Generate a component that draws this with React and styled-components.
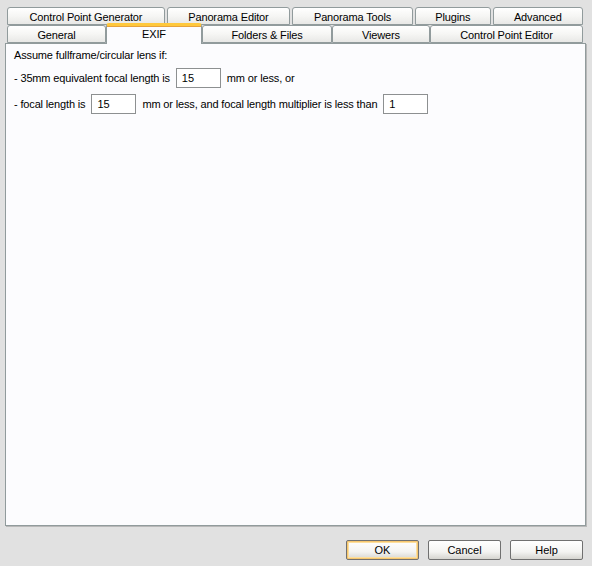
import React from "react";
import styled, { createGlobalStyle } from "styled-components";

const GlobalStyle = createGlobalStyle`
  html, body {
    margin: 0;
    padding: 0;
    background: #e1e1e1;
  }
  body {
    font-family: "Liberation Sans", Arial, sans-serif;
    font-size: 11px;
    letter-spacing: -0.15px;
    color: #000;
  }
`;

const Dialog = styled.div`
  width: 592px;
  height: 566px;
  box-sizing: border-box;
  padding: 8px 6px 0 5px;
  display: flex;
  flex-direction: column;
`;

const TabStrip = styled.div`
  display: flex;
  flex-direction: column;
  padding: 0 3px 0 2px;
`;

const TabRow = styled.div`
  display: flex;
  gap: ${(p) => p.$gap}px;
  height: ${(p) => p.$h}px;
  align-items: flex-end;
`;

const Tab = styled.div`
  position: relative;
  box-sizing: border-box;
  width: ${(p) => p.$w}px;
  height: ${(p) => (p.$active ? 21 : 18)}px;
  margin-bottom: ${(p) => (p.$active ? -1 : 0)}px;
  z-index: ${(p) => (p.$active ? 2 : 1)};
  display: flex;
  align-items: center;
  justify-content: center;
  padding-top: ${(p) => (p.$active ? 0 : 1)}px;
  border: 1px solid #919b9c;
  border-bottom: ${(p) => (p.$active ? "none" : "1px solid #919b9c")};
  border-radius: 3px 3px 0 0;
  background: ${(p) =>
    p.$active
      ? "#fcfcfe"
      : "linear-gradient(to bottom, #ffffff 0%, #f6f6f4 50%, #e8e8e6 100%)"};
  white-space: nowrap;
  ${(p) =>
    p.$active &&
    `
    border-top: 3px solid #ffc83c;
    box-shadow: inset 0 1px 0 #e6a23c;
    padding-bottom: 2px;
  `}
`;

const Panel = styled.div`
  box-sizing: border-box;
  height: 483px;
  border: 1px solid #919b9c;
  background: #fcfcfe;
  box-shadow: 1px 1px 0 #b8b8b8;
  padding: 4px 8px;
  display: flex;
  flex-direction: column;
  gap: 6px;
`;

const Line = styled.div`
  display: flex;
  align-items: center;
  gap: 6px;
  min-height: ${(p) => (p.$tall ? 20 : 14)}px;
`;

const Field = styled.input`
  box-sizing: border-box;
  width: 45px;
  height: 20px;
  border: 1px solid #8d9091;
  background: #fff;
  font: inherit;
  padding: 0 5px;
  outline: none;
`;

const ButtonBar = styled.div`
  display: flex;
  justify-content: flex-end;
  gap: 9px;
  padding: 14px 3px 0 0;
`;

const Button = styled.button`
  box-sizing: border-box;
  width: 73px;
  height: 20px;
  font: inherit;
  color: #000;
  border: 1px solid #707070;
  border-radius: 2px;
  background: linear-gradient(to bottom, #ffffff 0%, #f4f4f2 60%, #d6d5d0 100%);
  box-shadow: ${(p) =>
    p.$default ? "inset 0 0 0 1px #f6c66e, inset 0 0 0 2px #fcdf9f" : "none"};
  padding: 0;
`;

const topTabs = [
  { label: "Control Point Generator", w: 159 },
  { label: "Panorama Editor", w: 124 },
  { label: "Panorama Tools", w: 122 },
  { label: "Plugins", w: 76 },
  { label: "Advanced", w: 91 },
];

const bottomTabs = [
  { label: "General", w: 99 },
  { label: "EXIF", w: 96, active: true },
  { label: "Folders & Files", w: 130 },
  { label: "Viewers", w: 98 },
  { label: "Control Point Editor", w: 153 },
];

export default function App() {
  return (
    <>
      <GlobalStyle />
      <Dialog>
        <TabStrip>
          <TabRow $gap={2} $h={17}>
            {topTabs.map((t) => (
              <Tab key={t.label} $w={t.w}>
                {t.label}
              </Tab>
            ))}
          </TabRow>
          <TabRow $gap={0} $h={18}>
            {bottomTabs.map((t) => (
              <Tab key={t.label} $w={t.w} $active={t.active}>
                {t.label}
              </Tab>
            ))}
          </TabRow>
        </TabStrip>
        <Panel>
          <Line>Assume fullframe/circular lens if:</Line>
          <Line $tall>
            - 35mm equivalent focal length is
            <Field defaultValue="15" />
            mm or less, or
          </Line>
          <Line $tall>
            - focal length is
            <Field defaultValue="15" />
            mm or less, and focal length multiplier is less than
            <Field defaultValue="1" />
          </Line>
        </Panel>
        <ButtonBar>
          <Button $default>OK</Button>
          <Button>Cancel</Button>
          <Button>Help</Button>
        </ButtonBar>
      </Dialog>
    </>
  );
}
